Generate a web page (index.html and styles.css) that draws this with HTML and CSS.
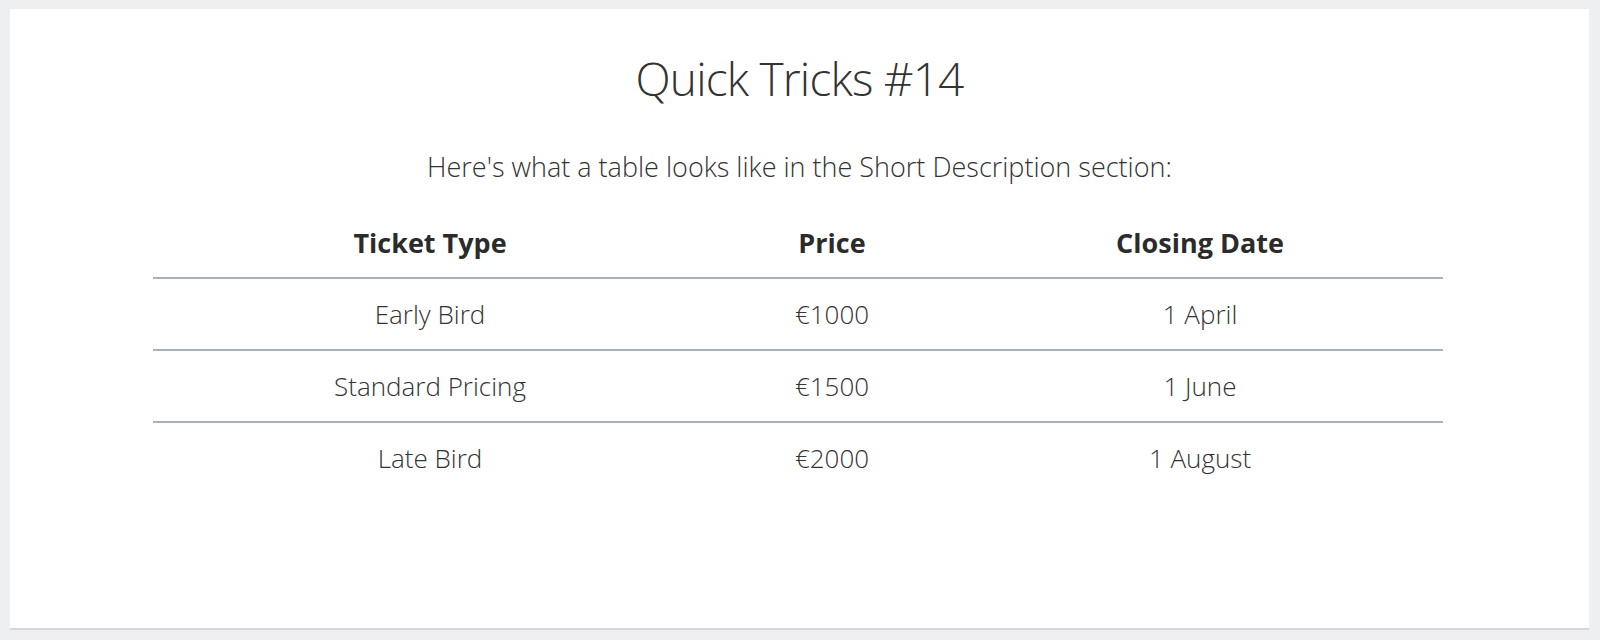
FILE: index.html
```html
<!DOCTYPE html>
<html lang="en">
<head>
<meta charset="utf-8">
<title>Quick Tricks #14</title>
<link rel="stylesheet" href="styles.css">
</head>
<body>
<div class="page">
  <main class="card">
    <h1 class="title">Quick Tricks #14</h1>
    <p class="intro">Here's what a table looks like in the Short Description section:</p>
    <table class="tickets">
      <colgroup>
        <col class="col-type">
        <col class="col-price">
        <col class="col-date">
      </colgroup>
      <thead>
        <tr><th>Ticket Type</th><th>Price</th><th>Closing Date</th></tr>
      </thead>
      <tbody>
        <tr><td>Early Bird</td><td>€1000</td><td>1 April</td></tr>
        <tr><td>Standard Pricing</td><td>€1500</td><td>1 June</td></tr>
        <tr><td>Late Bird</td><td>€2000</td><td>1 August</td></tr>
      </tbody>
    </table>
  </main>
</div>
</body>
</html>
```
FILE: styles.css
```css
html, body {
  margin: 0;
  padding: 0;
  background: #eeeff1;
}
body {
  font-family: "Open Sans", "Noto Sans", sans-serif;
  color: #333333;
}
.page {
  padding: 9px 11px 0 10px;
  height: 640px;
  box-sizing: border-box;
}
.card {
  background: #ffffff;
  height: 619px;
  box-shadow: 0 2px 0 #d6d7d9;
  padding-top: 41px;
  box-sizing: border-box;
  text-align: center;
}
.title {
  margin: 0;
  font-size: 46px;
  font-weight: 300;
  letter-spacing: -0.8px;
  line-height: 56px;
  color: #333333;
}
.intro {
  margin: 43px 0 0;
  font-size: 27px;
  font-weight: 300;
  line-height: 36px;
  color: #333333;
}
.tickets {
  width: 1290px;
  margin: 23px 0 0 143px;
  border-collapse: collapse;
  table-layout: fixed;
}
.col-type { width: 554px; }
.col-price { width: 250px; }
.col-date { width: 486px; }
.tickets th {
  font-size: 27px;
  font-weight: 700;
  line-height: 36px;
  padding: 17px 0 16px;
  border-bottom: 2px solid #a6b3bd;
  color: #2b2b2b;
}
.tickets td {
  font-size: 26px;
  font-weight: 300;
  line-height: 36px;
  padding: 17px 0;
  color: #333333;
}
.tickets tbody tr + tr td {
  border-top: 2px solid #a6b3bd;
}
```
